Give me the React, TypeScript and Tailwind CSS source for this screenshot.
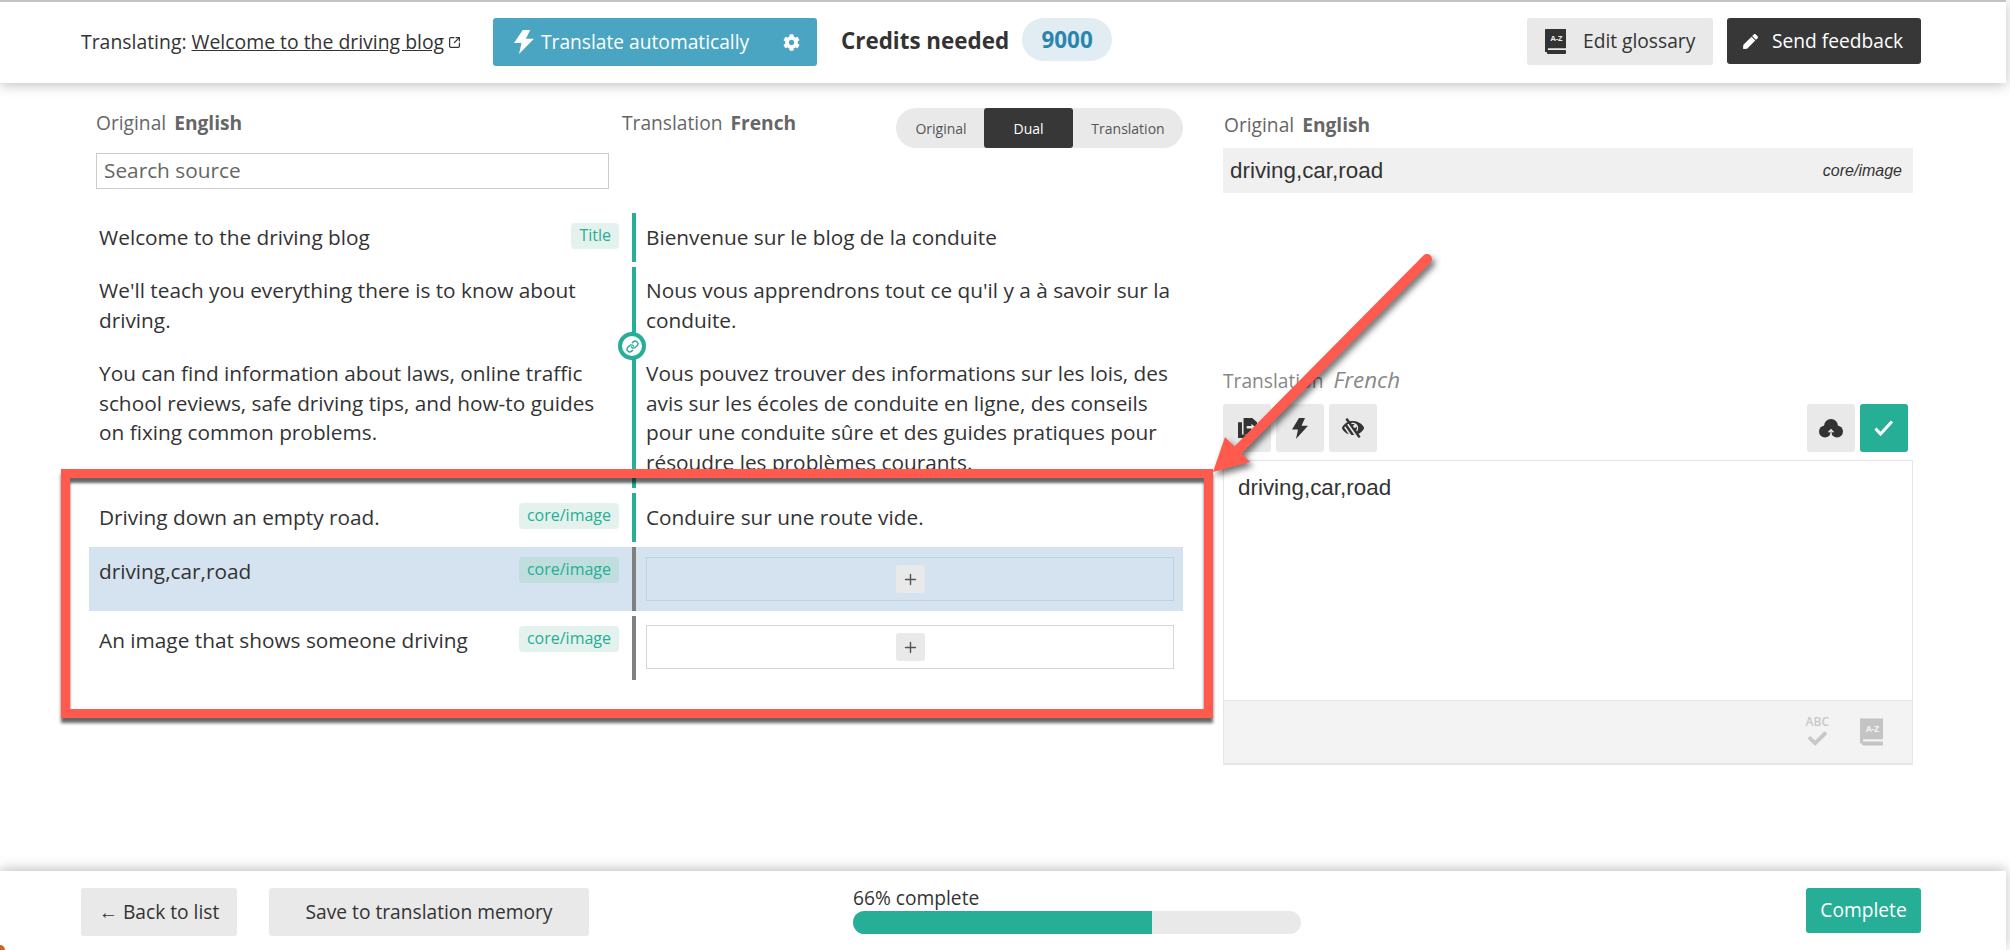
import { FaCheck, FaCog, FaLowVision, FaPen } from 'react-icons/fa';
import { Link, Plus, SquareArrowOutUpRight } from 'lucide-react';

const openSans = "font-['Open_Sans',sans-serif]";

function BoltIcon({ className }: { className: string }) {
  return (
    <svg viewBox="0 0 16 22" className={className} fill="currentColor" preserveAspectRatio="none">
      <path d="M7 0 L0 12 H6 L4 22 L16 8 H9.5 L13 0 Z" />
    </svg>
  );
}

// A-Z book icon, used in the header and in the editor footer
function GlossaryIcon({ color, letters, className }: { color: string; letters: string; className: string }) {
  return (
    <svg viewBox="0 0 22 26" className={className}>
      <path d="M2 0h20v20H4a2 2 0 0 0-2 1z" fill={color} />
      <rect x="0" y="0" width="3" height="24" fill={color} />
      <rect x="2" y="22" width="20" height="4" rx="1" fill={color} />
      <text x="12" y="13" textAnchor="middle" fontSize="8" fontWeight="700" fontFamily="Open Sans, sans-serif" fill={letters}>
        A-Z
      </text>
    </svg>
  );
}

function CopyIcon() {
  return (
    <svg viewBox="0 0 24 28" className="h-[20px] w-[19px]" fill="#333" preserveAspectRatio="none">
      <path d="M0 6h5v17h13v5H0z" />
      <path d="M7 0h11l6 6v17H7z" />
      <path d="M11 11.2h6V8l5 5-5 5v-3.2h-6z" fill="#e9e9e9" />
    </svg>
  );
}

function CloudIcon() {
  return (
    <svg viewBox="0 0 24 19" className="h-[19px] w-[24px]" fill="#333">
      <circle cx="12" cy="7" r="7" />
      <circle cx="6" cy="12.5" r="6" />
      <circle cx="18" cy="12.5" r="6" />
      <path d="M12 18V11M9.5 13.2 12 10.7l2.5 2.5" stroke="#e9e9e9" strokeWidth="1.3" fill="none" />
    </svg>
  );
}

function Tag({ label, active }: { label: string; active?: boolean }) {
  return (
    <span
      className={`h-[26px] shrink-0 rounded-[4px] px-[8px] text-[16px] leading-[25px] text-[#26ae96] ${
        active ? 'bg-[#c0dedd]' : 'bg-[#e4f2ee]'
      }`}
    >
      {label}
    </span>
  );
}

function EmptyCell({ active }: { active?: boolean }) {
  return (
    <div
      className={`flex h-[44px] items-center justify-center border ${
        active ? 'mb-[0.5px] border-[#c2d0dc]' : '-mt-[1px] mb-[1.5px] border-[#d6d6d6] bg-white'
      }`}
    >
      <button className="flex h-[28px] w-[29px] items-center justify-center rounded-[3px] bg-[#e9e9e9] text-[#555]">
        <Plus size={17} strokeWidth={2} />
      </button>
    </div>
  );
}

function Row({
  left,
  right,
  tag,
  done,
  active,
}: {
  left: React.ReactNode;
  right: React.ReactNode;
  tag?: string;
  done?: boolean;
  active?: boolean;
}) {
  return (
    <div className={`relative grid grid-cols-[543px_551px] ${active ? 'bg-[#d4e3ef]' : ''}`}>
      <div className="flex items-start justify-between gap-[10px] pb-[9.5px] pl-[10px] pr-[13px] pt-[10px]">
        <div className="min-w-0">{left}</div>
        {tag && <Tag label={tag} active={active} />}
      </div>
      <div className={`border-l-4 pb-[9.5px] pl-[10px] pr-[9px] pt-[10px] ${done ? 'border-[#26ae96]' : 'border-[#808080]'}`}>
        {right}
      </div>
    </div>
  );
}

export default function App() {
  return (
    <div className={`relative flex h-[950px] w-[2010px] flex-col overflow-hidden bg-white text-[#333] ${openSans}`}>
      {/* Top bar */}
      <header className="relative z-10 flex h-[83px] w-[2006px] shrink-0 items-start border-t-2 border-[#c4c4c4] bg-white pl-[81px] pr-[85px] pt-[16px] shadow-[0_2px_12px_rgba(0,0,0,0.25)]">
        <div className="flex h-[48px] w-[412px] items-center text-[19.4px]">
          <span>Translating:&nbsp;</span>
          <a className="underline">Welcome to the driving blog</a>
          <SquareArrowOutUpRight size={13} strokeWidth={2.2} className="ml-[4px]" />
        </div>
        <button className="flex h-[48px] w-[324px] items-center rounded-[3px] bg-[#49a5c1] pl-[21px] pr-[17px] text-[19.2px] text-white">
          <BoltIcon className="mr-[7px] h-[24px] w-[20px]" />
          <span className="flex-1 text-left">Translate automatically</span>
          <FaCog size={17} />
        </button>
        <span className="ml-[24px] flex h-[45px] items-center text-[22.4px] font-bold">Credits needed</span>
        <span className="ml-[13px] flex h-[43px] w-[90px] items-center justify-center rounded-full bg-[#e1ecf3] text-[22.4px] font-bold text-[#2a85ad]">
          9000
        </span>
        <button className="ml-auto flex h-[47px] w-[186px] items-center rounded-[3px] bg-[#e9e9e9] pl-[18px] text-[19.2px] text-[#333]">
          <GlossaryIcon color="#333" letters="#e9e9e9" className="mr-[17px] h-[25px] w-[21px]" />
          Edit glossary
        </button>
        <button className="ml-[14px] flex h-[46px] w-[194px] items-center rounded-[3px] bg-[#373737] pl-[16px] text-[19.2px] text-white">
          <FaPen size={15} className="mr-[14px]" />
          Send feedback
        </button>
      </header>

      {/* Main */}
      <main className="flex min-h-0 flex-1">
        <section className="ml-[89px] w-[1094px] shrink-0">
          <div className="flex pt-[25px]">
            <div className="w-[533px] pl-[7px]">
              <div className="h-[45px] text-[19.2px] leading-[30px] text-[#666]">
                Original <b className="ml-[3px]">English</b>
              </div>
              <input
                placeholder="Search source"
                className="block h-[36px] w-[513px] border border-[#ccc] px-[7px] pb-[2px] text-[20.8px] outline-none placeholder:text-[#666]"
              />
            </div>
            <div className="flex h-[40px] flex-1 items-start justify-between">
              <div className="text-[19.2px] leading-[30px] text-[#666]">
                Translation <b className="ml-[3px]">French</b>
              </div>
              <div className="flex h-[40px] items-stretch overflow-hidden rounded-full bg-[#e9e9e9] text-[14px] text-[#555]">
                <span className="flex w-[88px] items-center justify-center pl-[2px]">Original</span>
                <span className="flex w-[89px] items-center justify-center rounded-[3px] bg-[#373737] text-white">Dual</span>
                <span className="flex w-[110px] items-center justify-center">Translation</span>
              </div>
            </div>
          </div>

          <div className="mt-[24px] flex flex-col gap-[5px] text-[20.8px] leading-[29.5px]">
            <Row done tag="Title" left="Welcome to the driving blog" right="Bienvenue sur le blog de la conduite" />
            <Row
              done
              left={
                <>
                  <p className="-mt-[1px] mb-[24px]">We'll teach you everything there is to know about driving.</p>
                  <p>You can find information about laws, online traffic school reviews, safe driving tips, and how-to guides on fixing common problems.</p>
                </>
              }
              right={
                <div className="pb-[1.5px]">
                  <p className="-mt-[1px] mb-[24px]">Nous vous apprendrons tout ce qu'il y a à savoir sur la conduite.</p>
                  <p>Vous pouvez trouver des informations sur les lois, des avis sur les écoles de conduite en ligne, des conseils pour une conduite sûre et des guides pratiques pour résoudre les problèmes courants.</p>
                </div>
              }
            />
            <Row done tag="core/image" left="Driving down an empty road." right="Conduire sur une route vide." />
            <Row active tag="core/image" left="driving,car,road" right={<EmptyCell active />} />
            <Row tag="core/image" left="An image that shows someone driving" right={<EmptyCell />} />
          </div>
        </section>

        <aside className="ml-[40px] w-[690px] shrink-0">
          <div className="h-[65px] pl-[1px] pt-[27px] text-[19.2px] leading-[30px] text-[#666]">
            Original <b className="ml-[3px]">English</b>
          </div>
          <div className="flex h-[45px] items-center justify-between bg-[#f0f0f0] pl-[7px] pr-[11px] font-['Liberation_Sans',sans-serif]">
            <span className="text-[22.4px] text-[#333]">driving,car,road</span>
            <span className="text-[16px] italic text-[#333]">core/image</span>
          </div>
          <div className="mt-[172px] h-[30px] text-[19.2px] leading-[30px] text-[#888]">
            Translation&nbsp; <i className="text-[22.4px]">French</i>
          </div>
          <div className="mt-[9px] flex h-[48px] gap-[5px] pr-[5px] text-[#333]">
            <button className="flex w-[48px] items-center justify-center rounded-[3px] bg-[#e9e9e9]">
              <CopyIcon />
            </button>
            <button className="flex w-[48px] items-center justify-center rounded-[3px] bg-[#e9e9e9]">
              <BoltIcon className="h-[21px] w-[16px]" />
            </button>
            <button className="flex w-[48px] items-center justify-center rounded-[3px] bg-[#e9e9e9]">
              <FaLowVision size={22} />
            </button>
            <button className="ml-auto flex w-[48px] items-center justify-center rounded-[3px] bg-[#e9e9e9]">
              <CloudIcon />
            </button>
            <button className="flex w-[48px] items-center justify-center rounded-[3px] bg-[#26ae96]">
              <svg viewBox="0 0 20 16" className="h-[16px] w-[20px]" fill="none" stroke="white" strokeWidth="3">
                <path d="M1.5 8.5 L6.5 14 L18 1.5" />
              </svg>
            </button>
          </div>
          <div className="mt-[8px] flex h-[305px] flex-col border border-b-2 border-[#e6e6e6]">
            <div className="flex-1 px-[14px] py-[13px] font-['Liberation_Sans',sans-serif] text-[22.4px] leading-[28px] text-[#333]">
              driving,car,road
            </div>
            <div className="flex h-[63px] items-center justify-end gap-[31px] border-t border-[#e6e6e6] bg-[#f3f3f3] pr-[29px]">
              <div className="flex flex-col items-center text-[#c8c8c8]">
                <span className="text-[12px] font-semibold leading-[12px]">ABC</span>
                <FaCheck size={19} className="mt-[1px]" />
              </div>
              <GlossaryIcon color="#c4c4c4" letters="#f3f3f3" className="h-[28px] w-[23px]" />
            </div>
          </div>
        </aside>
      </main>

      {/* Bottom bar */}
      <footer className="relative z-10 flex h-[79px] w-[2006px] shrink-0 items-start bg-white pl-[81px] pr-[85px] pt-[17px] text-[19.2px] shadow-[0_-2px_12px_rgba(0,0,0,0.25)]">
        <button className="flex h-[48px] w-[156px] items-center justify-center rounded-[3px] bg-[#e9e9e9]">← Back to list</button>
        <button className="ml-[32px] flex h-[48px] w-[320px] items-center justify-center rounded-[3px] bg-[#e9e9e9]">
          Save to translation memory
        </button>
        <div className="ml-[264px] w-[448px]">
          <div className="-mt-[3px] h-[25px] leading-[25px]">66% complete</div>
          <div className="mt-[1px] h-[23px] overflow-hidden rounded-full bg-[#e9e9e9]">
            <div className="h-full bg-[#26ae96]" style={{ width: '66.8%' }} />
          </div>
        </div>
        <button className="ml-auto flex h-[45px] w-[115px] items-center justify-center rounded-[3px] bg-[#26ae96] text-white">
          Complete
        </button>
      </footer>

      {/* Link badge between the two joined rows */}
      <div className="absolute left-[618px] top-[332px] z-10 flex h-[28px] w-[28px] items-center justify-center rounded-full border-[4px] border-[#26ae96] bg-white text-[#26ae96]">
        <Link size={13} strokeWidth={2.6} />
      </div>

      {/* Red annotation: frame and arrow */}
      <div className="pointer-events-none absolute left-[61px] top-[469px] z-20 h-[249px] w-[1152px] border-[9px] border-[#ff5a4e] shadow-[0_5px_3px_rgba(0,0,0,0.6),inset_0_5px_3px_rgba(0,0,0,0.6)]" />
      <svg className="pointer-events-none absolute left-[1200px] top-[250px] z-20 h-[240px] w-[240px] drop-shadow-[3px_4px_3px_rgba(0,0,0,0.55)]" viewBox="0 0 240 240">
        <path d="M227 9 L 30 208" stroke="#ff5a4e" strokeWidth="10" strokeLinecap="round" fill="none" />
        <path d="M13 222 L25 187 L50 212 Z" fill="#ff5a4e" />
      </svg>

      {/* Orange corner of the window behind */}
      <div className="absolute -bottom-[5px] -left-[5px] z-20 h-[10px] w-[10px] rounded-full bg-[#d2601f]" />
    </div>
  );
}
